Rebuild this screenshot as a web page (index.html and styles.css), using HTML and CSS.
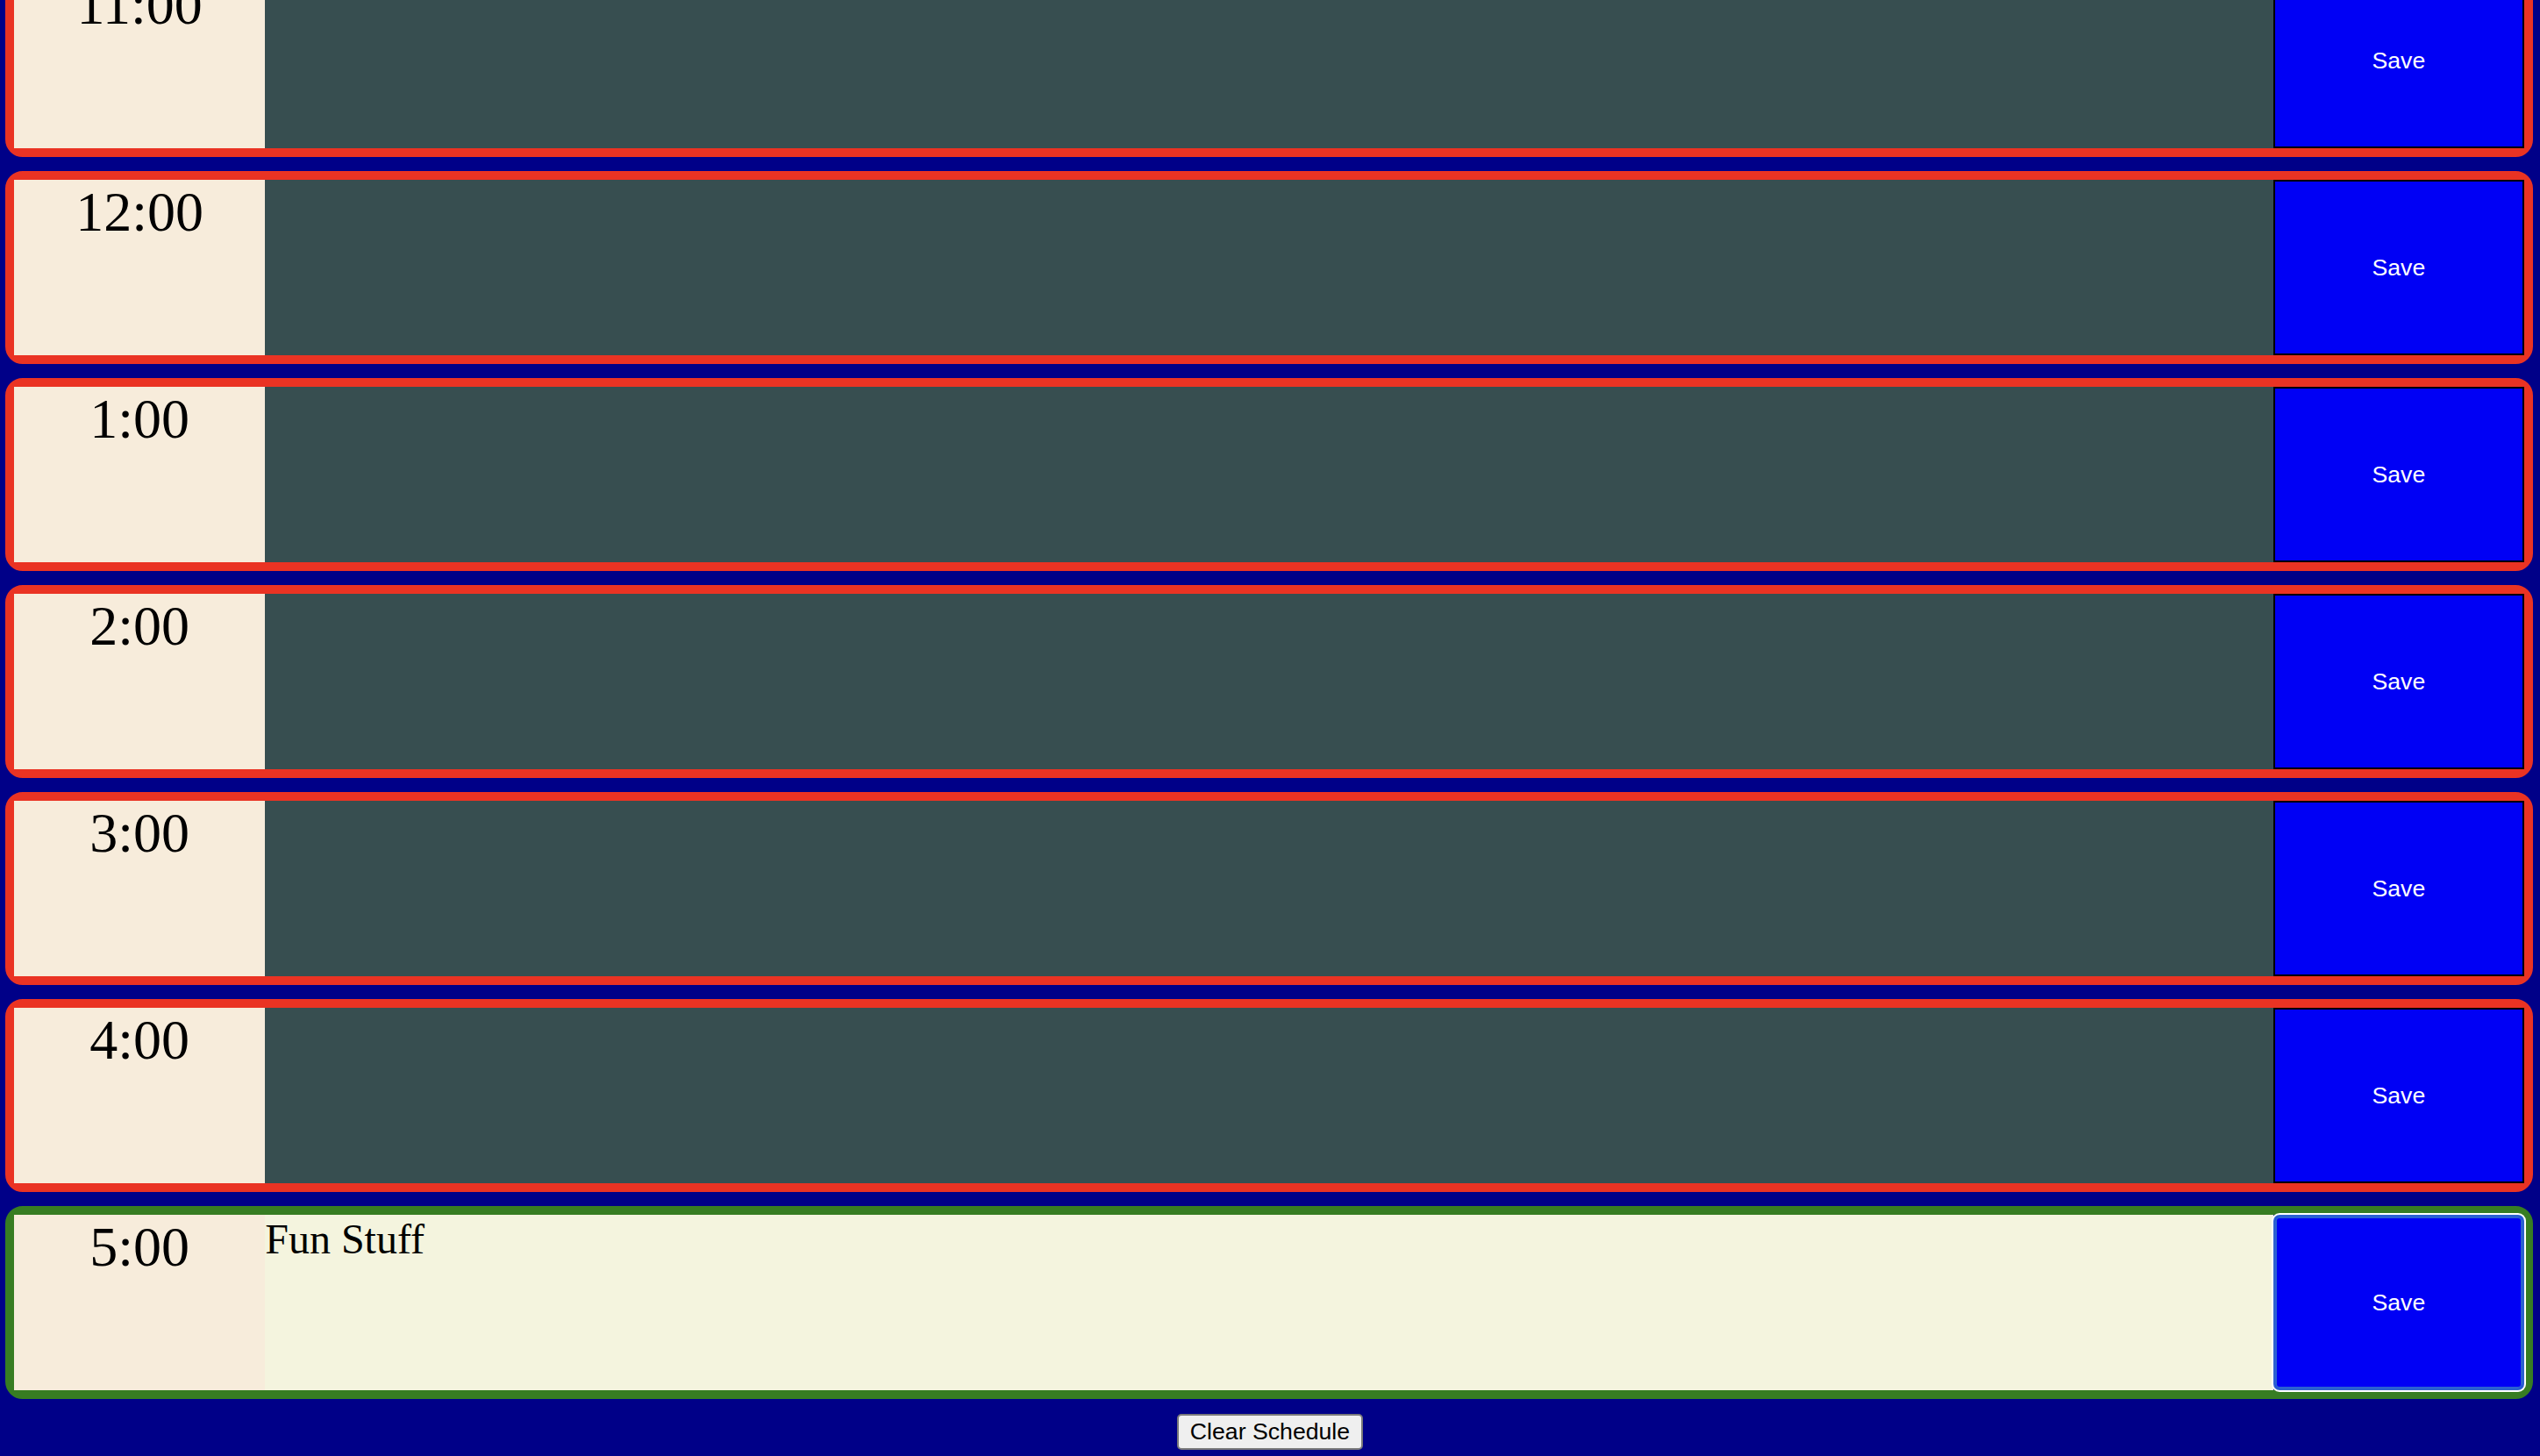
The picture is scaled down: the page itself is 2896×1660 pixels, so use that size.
FILE: index.html
```html
<!DOCTYPE html>
<html lang="en">
<head>
<meta charset="utf-8">
<title>Work Day Scheduler</title>
<link rel="stylesheet" href="styles.css">
</head>
<body>
<main class="schedule">
  <div class="row past">
    <div class="hour">11:00</div>
    <textarea class="description"></textarea>
    <button class="save-btn">Save</button>
  </div>
  <div class="row past">
    <div class="hour">12:00</div>
    <textarea class="description"></textarea>
    <button class="save-btn">Save</button>
  </div>
  <div class="row past">
    <div class="hour">1:00</div>
    <textarea class="description"></textarea>
    <button class="save-btn">Save</button>
  </div>
  <div class="row past">
    <div class="hour">2:00</div>
    <textarea class="description"></textarea>
    <button class="save-btn">Save</button>
  </div>
  <div class="row past">
    <div class="hour">3:00</div>
    <textarea class="description"></textarea>
    <button class="save-btn">Save</button>
  </div>
  <div class="row past">
    <div class="hour">4:00</div>
    <textarea class="description"></textarea>
    <button class="save-btn">Save</button>
  </div>
  <div class="row present">
    <div class="hour">5:00</div>
    <textarea class="description">Fun Stuff</textarea>
    <button class="save-btn focused">Save</button>
  </div>
</main>
<footer class="footer">
  <button class="clear-btn">Clear Schedule</button>
</footer>
</body>
</html>
```
FILE: styles.css
```css
html, body {
  margin: 0;
  padding: 0;
  background: #000088;
  overflow: hidden;
}

.schedule {
  display: flex;
  flex-direction: column;
  gap: 16px;
  padding: 0 8px 0 6px;
  margin-top: -41px;
}

.row {
  display: flex;
  height: 200px;
  border: 10px solid #ea3323;
  border-radius: 20px;
}

.row.present {
  border-color: #377d22;
}

.hour {
  width: 10%;
  flex: none;
  background: #f7ecdb;
  text-align: center;
  font-family: "Liberation Serif", "Times New Roman", serif;
  font-size: 64px;
  line-height: normal;
  color: #000;
}

.description {
  flex: 1;
  margin: 0;
  padding: 0;
  border: none;
  outline: none;
  resize: none;
  background: #374e50;
  font-family: "Liberation Serif", "Times New Roman", serif;
  font-size: 48px;
  line-height: normal;
  color: #000;
}

.present .description {
  background: #f4f4de;
}

.save-btn {
  width: 10%;
  flex: none;
  margin: 0;
  padding: 0;
  background: #0000f5;
  color: #fff;
  border: 2px solid #000;
  border-radius: 0;
  font-family: "Liberation Sans", Arial, sans-serif;
  font-size: 26.67px;
}

.save-btn.focused {
  border: 2px solid #2b61d1;
  border-radius: 7px;
  box-shadow: inset 0 0 0 2px #2b61d1, 0 0 0 2px #ffffff;
}

.footer {
  display: flex;
  justify-content: center;
  padding-top: 17px;
}

.clear-btn {
  margin: 0;
  padding: 3px 13px;
  background: #efefef;
  color: #000;
  border: 2px solid #7a7a7a;
  border-radius: 5px;
  font-family: "Liberation Sans", Arial, sans-serif;
  font-size: 26.67px;
  line-height: normal;
}
```
